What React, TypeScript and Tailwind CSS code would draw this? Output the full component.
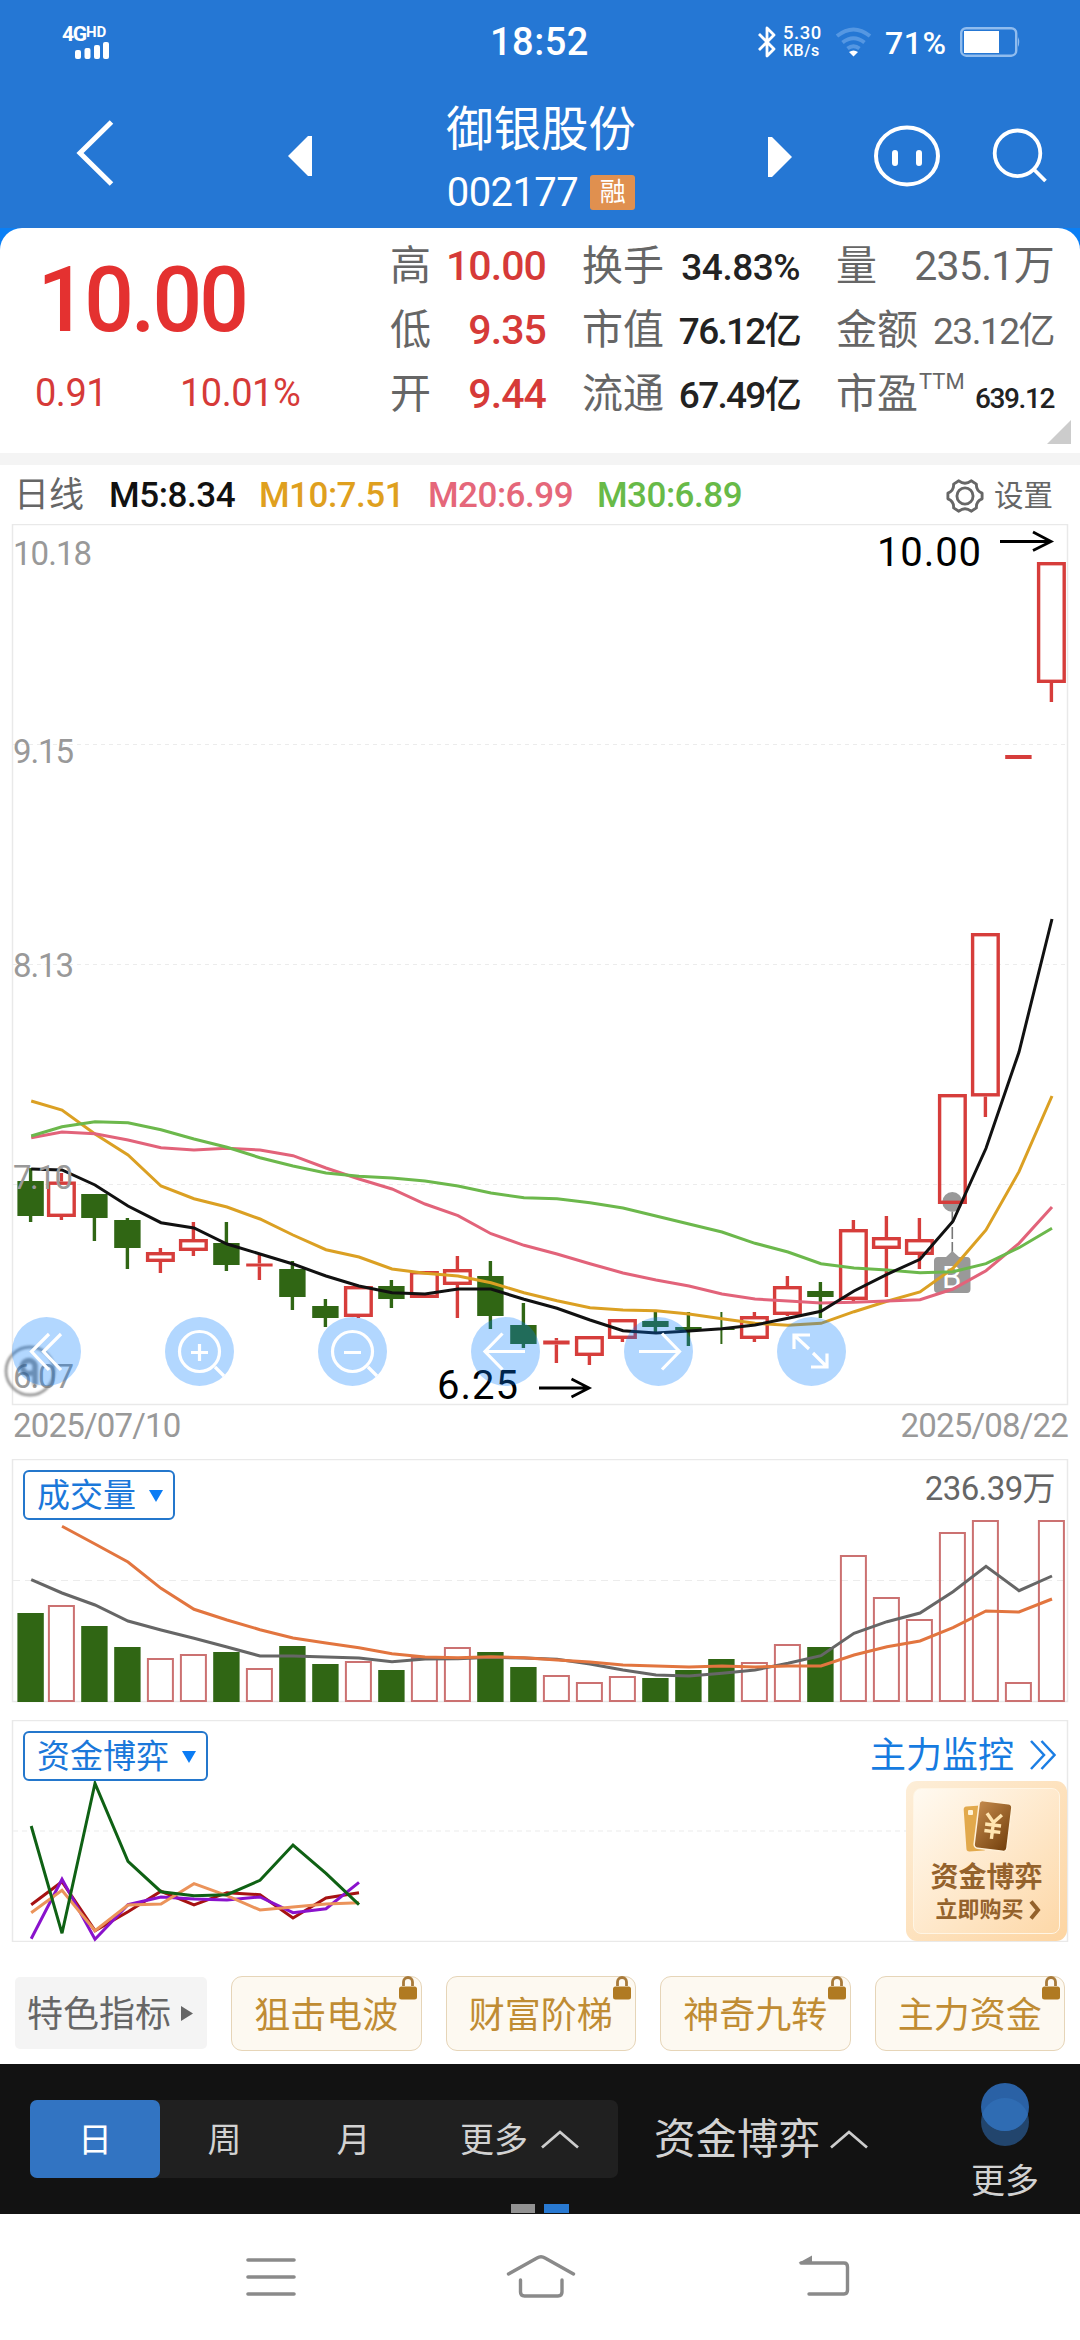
import { type ReactNode } from "react";

type Candle = {
  up: boolean;
  high: number;
  top: number;
  bottom: number;
  low: number;
};

const RED = "#d63d3b";
const GREEN = "#306614";
const STEP = 33;

// [up, high, body top, body bottom, low]
const CANDLES: Candle[] = (
  [
    [0, 1168, 1181, 1216, 1222],
    [1, 1173, 1181.5, 1217, 1220],
    [0, 1194, 1194, 1218, 1241],
    [0, 1218, 1220, 1248, 1269],
    [1, 1248, 1252, 1262, 1273],
    [1, 1222, 1239, 1251, 1256],
    [0, 1222, 1243, 1265, 1271],
    [1, 1255, 1263.5, 1266.5, 1280],
    [0, 1261, 1269, 1297, 1310],
    [0, 1299, 1306, 1318, 1327],
    [1, 1286, 1286, 1317, 1318],
    [0, 1280, 1286, 1299, 1308],
    [1, 1271, 1271, 1298, 1298],
    [1, 1256, 1269, 1285, 1318],
    [0, 1261, 1276, 1316, 1329],
    [0, 1303, 1325, 1344, 1348],
    [1, 1338, 1340.5, 1344.5, 1363],
    [1, 1336, 1336, 1356, 1365],
    [1, 1319, 1319, 1339, 1342],
    [0, 1312, 1321, 1327, 1332],
    [0, 1312, 1327, 1330, 1346],
    [0, 1312, 1329, 1330, 1344],
    [1, 1312, 1316, 1339, 1342],
    [1, 1276, 1286, 1315, 1316],
    [0, 1282, 1291, 1297, 1318],
    [1, 1220, 1229, 1300, 1301],
    [1, 1216, 1237, 1249, 1297],
    [1, 1218, 1239, 1255, 1269],
    [1, 1094, 1094, 1204, 1204],
    [1, 933, 933, 1096.5, 1117],
    [1, 755, 755, 759, 759],
    [1, 562, 562, 683, 702],
  ] as number[][]
).map(([up, high, top, bottom, low]) => ({ up: up === 1, high, top, bottom, low }));

const M5 = [
  1169, 1170, 1185, 1206, 1222.7, 1228, 1244, 1254, 1264, 1276, 1286, 1292.7, 1294, 1289, 1289, 1299.3,
  1308.3, 1320, 1330.7, 1333, 1331, 1328.7, 1325, 1318.3, 1311.3, 1291, 1274.3, 1259.3, 1221.3, 1148.3,
  1052, 919,
];
const M10 = [
  1101, 1110, 1134, 1155, 1186, 1198.7, 1207, 1219, 1235, 1249.7, 1257, 1269, 1273.3, 1276, 1282.7,
  1292.7, 1300.7, 1307.7, 1310, 1310.7, 1314, 1318.7, 1323.3, 1325.3, 1323.3, 1311.7, 1301.3, 1292,
  1268.3, 1230, 1171.7, 1096,
];
const M20 = [
  1137.7, 1132, 1133.7, 1140, 1147.7, 1150, 1148.3, 1150, 1155.7, 1168, 1179, 1189, 1204, 1215.7, 1233.7,
  1245.3, 1254, 1263.7, 1273, 1280, 1286, 1294, 1299, 1301, 1303, 1302.3, 1301, 1299.7, 1289, 1270.7,
  1243.3, 1207,
];
const M30 = [
  1136, 1126.7, 1121.7, 1122.7, 1129.7, 1139, 1147.3, 1157.7, 1166, 1173, 1176.3, 1178, 1181, 1186, 1193,
  1197.7, 1198.7, 1202.7, 1208, 1216, 1224, 1232, 1243.3, 1252, 1263.7, 1268, 1270, 1272.7, 1271.7,
  1263.7, 1247.7, 1228.3,
];

const VOLUMES = [
  1613, 1605, 1626, 1647, 1658, 1654, 1652, 1668, 1646, 1664, 1661, 1670, 1657, 1647, 1652, 1667, 1675,
  1682, 1676, 1678, 1670, 1659, 1662, 1644, 1647, 1555, 1597, 1619, 1532, 1520, 1682, 1520,
];
const VOL5 = [
  1579.7, 1593, 1605, 1621, 1630, 1638.3, 1647, 1656, 1656, 1657, 1658, 1661.7, 1659, 1658.7, 1657.3,
  1658, 1659.3, 1664, 1670, 1675, 1676, 1673.3, 1670, 1663.3, 1655.7, 1633.3, 1621.7, 1613, 1591.7,
  1566.3, 1590.7, 1576,
];
const VOL10 = [
  1526.3, 1544, 1562, 1588.3, 1609.3, 1620, 1629.7, 1638, 1643, 1647.7, 1653.7, 1657, 1657.7, 1656.7,
  1657.7, 1660, 1662, 1665, 1666, 1667, 1666, 1667, 1666, 1666, 1655, 1646.7, 1641, 1627.7, 1611, 1612,
  1599,
];

const FUND_LINES = [
  { color: "#a61212", data: [1904.7, 1881.7, 1930.7, 1911.7, 1891.3, 1905, 1892.7, 1894.7, 1918, 1898, 1892.7] },
  { color: "#8a12cc", data: [1938.7, 1879.3, 1939.3, 1904.7, 1897, 1899, 1900, 1897, 1912.7, 1908.7, 1882.3] },
  { color: "#eb935a", data: [1912.7, 1890.3, 1930.7, 1905, 1904, 1883.7, 1895.7, 1910, 1907, 1904, 1902.7] },
  { color: "#0f6114", data: [1826, 1933.3, 1783.3, 1861.3, 1891.7, 1895.7, 1894.7, 1880.3, 1845, 1873.3, 1904.7] },
];

const TAGS = ["狙击电波", "财富阶梯", "神奇九转", "主力资金"];

function xAt(i: number): number {
  return i === 0 ? 30.6 : 28.4 + i * STEP;
}

function points(data: number[], from = 0): string {
  return data.map((y, i) => `${xAt(i + from) + 0.6},${y}`).join(" ");
}

function Line({ data, color, from = 0 }: { data: number[]; color: string; from?: number }) {
  return <polyline points={points(data, from)} fill="none" stroke={color} strokeWidth="3" />;
}

function StatusBar() {
  return (
    <div className="flex h-[84px] items-center text-white">
      <div className="w-[110px] pl-[62px]">
        <div className="flex h-[16px] items-start leading-none">
          <span className="text-[21px] font-bold leading-[17px] tracking-[-1.200px]">4G</span>
          <span className="text-[15px] font-bold leading-[12px]">HD</span>
        </div>
        <svg width="36" height="17" viewBox="0 0 36 17" className="ml-[12px]" fill="white">
          <rect x="1" y="8" width="6" height="9" rx="2" />
          <rect x="10.5" y="6" width="6" height="11" rx="2" />
          <rect x="20" y="3" width="6" height="14" rx="2" />
          <rect x="29" y="0" width="6" height="17" rx="2" />
        </svg>
      </div>
      <span className="ml-[380px] w-[267px] text-[38px] font-medium tracking-[0.5px]">18:52</span>
      <svg width="20" height="32" viewBox="0 0 20 32" fill="none" stroke="white" strokeWidth="2.8" strokeLinejoin="round">
        <path d="M2 8 L17 23 L10 30 V2 L17 9 L2 24" />
      </svg>
      <div className="ml-[6px] flex w-[40px] flex-col text-[18.500px] font-medium leading-[17px]">
        <span className="tracking-[0.500px]">5.30</span>
        <span className="text-[16px] tracking-[0.500px]">KB/s</span>
      </div>
      <svg width="37" height="30" viewBox="0 0 37 30" className="ml-[12px]" fill="none" stroke="#5597e2" strokeWidth="4">
        <path d="M2 9 Q18.500 -4 35 9" />
        <path d="M7.500 15.500 Q18.500 7 29.500 15.500" />
        <path d="M12.500 21.500 Q18.500 17 24.500 21.500" />
        <path d="M14 25 Q18.500 22 23 25 L18.500 29.500 Z" fill="white" stroke="none" />
      </svg>
      <span className="ml-[13px] w-[75px] pt-[2px] text-[32px] font-medium tracking-[0.500px]">71%</span>
      <svg width="61" height="30" viewBox="0 0 61 30">
        <rect x="1.200" y="1.200" width="55" height="27.500" rx="5" fill="none" stroke="#90bcee" strokeWidth="2.400" />
        <rect x="4" y="4" width="35" height="22" fill="white" />
        <path d="M58 10 Q60.500 15 58 20 Z" fill="#90bcee" />
      </svg>
    </div>
  );
}

function Header() {
  return (
    <div className="flex h-[144px] items-start text-white">
      <svg width="40" height="68" viewBox="0 0 40 68" className="ml-[76px] mt-[35px]" fill="none" stroke="white" strokeWidth="5">
        <path d="M35.500 3 L4 34 L35.500 65" />
      </svg>
      <svg width="24" height="40" viewBox="0 0 24 40" className="ml-[172px] mt-[52px]" fill="white">
        <path d="M24 0 V40 H20 L0 20 L20 0 Z" />
      </svg>
      <div className="ml-[127px] flex w-[204px] flex-col items-center pt-[14px]">
        <span className="h-[64px] text-[47.500px] leading-[64px]">御银股份</span>
        <div className="mt-[11px] flex h-[38px] items-center gap-[12px]">
          <span className="pt-[2px] text-[40px] leading-[38px] tracking-[-0.600px]">002177</span>
          <span className="flex h-[35px] w-[45px] items-center justify-center rounded-[3px] bg-[#e0904f] text-[26px] leading-none">融</span>
        </div>
      </div>
      <svg width="24" height="40" viewBox="0 0 24 40" className="ml-[125px] mt-[53px]" fill="white">
        <path d="M0 0 V40 H4 L24 20 L4 0 Z" />
      </svg>
      <svg width="68" height="62" viewBox="0 0 68 62" className="ml-[81px] mt-[41px]" fill="none" stroke="white" strokeLinecap="round">
        <ellipse cx="34" cy="31" rx="31" ry="28.500" strokeWidth="4" />
        <path d="M22 28 V38 M46 28 V38" strokeWidth="6" />
      </svg>
      <svg width="58" height="58" viewBox="0 0 58 58" className="ml-[50px] mt-[43px]" fill="none" stroke="white" strokeWidth="3.800">
        <circle cx="26.500" cy="26.300" r="22.800" />
        <path d="M42.500 42 L54.500 54" />
      </svg>
    </div>
  );
}

function Row({ label, value, className }: { label: ReactNode; value: string; className: string }) {
  return (
    <div className="flex h-[64px] items-center justify-between whitespace-nowrap">
      <span className="text-[41px] leading-[64px] text-[#666]">{label}</span>
      <span className={"leading-[64px] " + className}>{value}</span>
    </div>
  );
}

function Quote() {
  return (
    <div className="bg-[#0a7ff5]">
      <div className="flex h-[225px] rounded-t-[22px] bg-white">
        <div className="w-[390px] text-[#d63a38]">
          <div className="h-[132px] origin-left scale-x-[0.96] pl-[39px] pt-[26px] text-[91px] font-medium leading-[92px] tracking-[-3px] text-[#e43130]">
            10.00
          </div>
          <div className="flex pl-[35px] pt-[1px] text-[38px] leading-[64px]">
            <span className="w-[145px] tracking-[-0.500px]">0.91</span>
            <span className="tracking-[-0.500px]">10.01%</span>
          </div>
        </div>
        <div className="w-[156px] pt-[6px]">
          <Row label="高" value="10.00" className="text-[41px] font-medium tracking-[-0.900px] text-[#d63a38]" />
          <Row label="低" value="9.35" className="text-[41px] font-medium tracking-[-0.900px] text-[#d63a38]" />
          <Row label="开" value="9.44" className="text-[41px] font-medium tracking-[-0.900px] text-[#d63a38]" />
        </div>
        <div className="ml-[36px] w-[218px] pt-[6px]">
          <Row label="换手" value="34.83%" className="pt-[3px] text-[37px] font-medium tracking-[-0.500px] text-[#222]" />
          <Row label="市值" value="76.12亿" className="pt-[3px] text-[37px] font-medium tracking-[-1.700px] text-[#222]" />
          <Row label="流通" value="67.49亿" className="pt-[3px] text-[37px] font-medium tracking-[-1.700px] text-[#222]" />
        </div>
        <div className="ml-[36px] w-[218px] pt-[6px]">
          <Row label="量" value="235.1万" className="text-[41px] tracking-[-0.700px] text-[#666]" />
          <Row label="金额" value="23.12亿" className="pt-[3px] text-[37px] tracking-[-1.500px] text-[#666]" />
          <Row
            label={
              <span className="flex">
                市盈<span className="ml-[1px] mt-[-12px] text-[22px]">TTM</span>
              </span>
            }
            value="639.12"
            className="pt-[10px] text-[28px] font-medium tracking-[-1.400px] text-[#222]"
          />
        </div>
        <svg width="24" height="24" viewBox="0 0 24 24" className="-ml-[7px] mt-[192px]" fill="#ccc">
          <path d="M24 0 V24 H0 Z" />
        </svg>
      </div>
    </div>
  );
}

function MaBar() {
  return (
    <div className="flex h-[59px] items-center whitespace-nowrap pl-[14px] pt-[3px] text-[35px] font-medium">
      <span className="w-[95px] font-normal text-[#666]">日线</span>
      <span className="w-[150px] tracking-[-0.400px] text-[#111]">M5:8.34</span>
      <span className="w-[169px] tracking-[-0.500px] text-[#dfa01e]">M10:7.51</span>
      <span className="w-[169px] tracking-[-0.500px] text-[#e5677a]">M20:6.99</span>
      <span className="w-[349px] tracking-[-0.500px] text-[#68ba48]">M30:6.89</span>
      <svg width="38" height="36" viewBox="0 0 40 36" fill="none" stroke="#666" strokeWidth="3" strokeLinejoin="round">
        <path d="M13.500 2 Q20 7 26.500 2 L32 5.500 Q31.500 12.500 38 15 V21 Q31.500 23.500 32 30.500 L26.500 34 Q20 29 13.500 34 L8 30.500 Q8.500 23.500 2 21 V15 Q8.500 12.500 8 5.500 Z" />
        <circle cx="20" cy="18" r="8.500" />
      </svg>
      <span className="ml-[10px] text-[29.500px] font-normal text-[#666]">设置</span>
    </div>
  );
}

function CandleMark({ candle, x, thin }: { candle: Candle; x: number; thin: boolean }) {
  const { up, high, top, bottom, low } = candle;
  const color = up ? RED : GREEN;
  const flat = bottom - top < 5;
  return (
    <g stroke={color} strokeWidth={thin ? 2 : 3.4}>
      {high < top && <path d={`M${x} ${high} V${top}`} />}
      {low > bottom && <path d={`M${x} ${bottom} V${low}`} />}
      {up && !flat ? (
        <rect x={x - 12.800} y={top + 1.700} width="25.600" height={bottom - top - 3.400} fill="none" />
      ) : (
        <rect x={x - 13.200} y={top} width="26.400" height={bottom - top} fill={color} stroke="none" />
      )}
    </g>
  );
}

const CONTROLS: ReactNode[] = [
  <path key="first" d="M37 17 L19.500 34.500 L37 53 M49 17 L31.500 34.500 L49 53" />,
  <path key="in" d="M50 50 L59 59 M34.500 27 V44 M26 35.500 H43 M54.500 34.500 A20 20 0 1 1 14.500 34.500 A20 20 0 1 1 54.500 34.500" />,
  <path key="out" d="M50 50 L59 59 M26 35.500 H43 M54.500 34.500 A20 20 0 1 1 14.500 34.500 A20 20 0 1 1 54.500 34.500" />,
  <path key="left" d="M54 34.500 H14 M31.500 16.500 L14 34.500 L31.500 52.500" />,
  <path key="right" d="M15 34.500 H55 M38 16.500 L55.500 34.500 L38 52.500" />,
  <path key="full" d="M17 32 V18 H33 M17 18 L32 32 M36 36 L50 50 M50 36.500 V50 H34" />,
];

function PriceChart() {
  return (
    <div className="relative h-[880px]">
      <svg width="1080" height="882" viewBox="0 524 1080 882" className="block" fontFamily='Roboto, "Noto Sans CJK SC", sans-serif'>
        <rect x="12.500" y="524.500" width="1055" height="880" fill="none" stroke="#e9e9e9" strokeWidth="1.500" />
        <path d="M13 744.500 H1067 M13 964.500 H1067 M13 1184.500 H1067" stroke="#ececec" strokeDasharray="4 4" />
        <circle cx="952.300" cy="1202" r="10" fill="#999" />
        <path d="M952.300 1212 V1252" stroke="#777" strokeWidth="1.600" strokeDasharray="12 3" />
        <path d="M952.300 1251 L959 1257 H967 Q970.500 1257 970.500 1261 V1289 Q970.500 1293 967 1293 H938 Q934 1293 934 1289 V1261 Q934 1257 938 1257 H946 Z" fill="#999" />
        {CANDLES.map((c, i) => (
          <CandleMark key={i} candle={c} x={xAt(i)} thin={i === 21} />
        ))}
        <text x="942" y="1288" fontSize="31" fill="white">B</text>
        <Line data={M10} color="#dba023" />
        <Line data={M20} color="#e2637a" />
        <Line data={M30} color="#6cb84c" />
        <Line data={M5} color="#111" />
        <g fill="#999" fontSize="33">
          <text x="13" y="565" textLength="79">10.18</text>
          <text x="13" y="763" textLength="61">9.15</text>
          <text x="13" y="977" textLength="61">8.13</text>
          <text x="13" y="1189" textLength="60">7.10</text>
          <text x="13" y="1388" textLength="61">6.07</text>
        </g>
        <g fill="#000" fontSize="40">
          <text x="877" y="565.500" textLength="104">10.00</text>
          <text x="437" y="1398.500" textLength="81">6.25</text>
        </g>
        <g fill="none" stroke="#000" strokeWidth="2.800">
          <path d="M1000 541.500 H1051 M1033 532 L1051 541.500 L1033 550.500" />
          <path d="M539 1388 H589 M571.500 1379 L589 1388 L571.500 1397" />
        </g>
      </svg>
      <svg width="60" height="60" viewBox="0 0 60 60" className="absolute left-0 top-[817px] blur-[1px]" fill="none">
        <circle cx="30" cy="30" r="24" stroke="#777" strokeOpacity="0.750" strokeWidth="2.800" />
        <path d="M35 44 V24 A6.500 6.500 0 1 0 33 31" stroke="#444" strokeOpacity="0.550" strokeWidth="5.500" />
      </svg>
      {/* chart controls */}
      <div className="absolute left-[12px] top-[793px] flex gap-[84px]">
        {CONTROLS.map((icon, i) => (
          <svg key={i} width="69" height="69" viewBox="0 0 69 69" fill="none" stroke="white" strokeWidth="3.200">
            <circle cx="34.500" cy="34.500" r="34.500" fill="#007aff" fillOpacity="0.300" stroke="none" />
            {icon}
          </svg>
        ))}
      </div>
    </div>
  );
}

function IndicatorSelect({ label }: { label: string }) {
  return (
    <button className="flex h-[50px] items-center gap-[13px] rounded-[6px] border-2 border-[#2477cc] bg-white pb-0 pl-[12px] pr-[10px] pt-[1px] text-[33px] leading-none text-[#1b78da]">
      {label}
      <svg width="14" height="12" viewBox="0 0 14 12" fill="#0b7cf4">
        <path d="M0 0 H14 L7 12 Z" />
      </svg>
    </button>
  );
}

function VolumeChart() {
  return (
    <div className="relative h-[244px]">
      <svg width="1080" height="244" viewBox="0 1459 1080 244" className="block">
        <rect x="12.500" y="1459.500" width="1055" height="242" fill="none" stroke="#e9e9e9" strokeWidth="1.500" />
        <path d="M13 1580.500 H1067" stroke="#ececec" strokeDasharray="7 5" />
        {VOLUMES.map((y, i) =>
          CANDLES[i].up ? (
            <rect key={i} x={xAt(i) - 12.500} y={y + 1} width="25" height={1700 - y} fill="none" stroke="#cb7171" strokeWidth="2" />
          ) : (
            <rect key={i} x={xAt(i) - 13.200} y={y} width="26.400" height={1702 - y} fill={GREEN} />
          ),
        )}
        <Line data={VOL5} color="#666" />
        <Line data={VOL10} from={1} color="#e2753f" />
      </svg>
      <div className="absolute inset-x-0 top-0 flex items-start justify-between pl-[23px] pr-[25px] pt-[11px]">
        <IndicatorSelect label="成交量" />
        <span className="pt-[2px] text-[33px] leading-[34px] tracking-[-0.600px] text-[#666]">236.39万</span>
      </div>
    </div>
  );
}

function PromoCard() {
  return (
    <div className="absolute right-[13px] top-[61px] h-[160px] w-[161px] rounded-[11px] bg-gradient-to-br from-[#fdeed8] to-[#fdd5a2] p-[7px]">
      <div className="flex h-full flex-col items-center rounded-[8px] border border-[#fff5e4] bg-gradient-to-br from-[#fffaf1] to-[#fdd8a8] pt-[11px] text-[#94622c]">
        <svg width="52" height="54" viewBox="0 0 52 54">
          <defs>
            <linearGradient id="card" x1="0" y1="0" x2="1" y2="1">
              <stop offset="0" stopColor="#c58b4c" />
              <stop offset="1" stopColor="#713e0b" />
            </linearGradient>
          </defs>
          <rect x="4" y="6" width="20" height="45" rx="3" fill="#e2a94c" transform="rotate(-4 14 28)" />
          <rect x="7" y="10" width="5" height="5" rx="1" fill="#fff3d8" />
          <g transform="rotate(7 32 26)">
            <rect x="15.500" y="2" width="33" height="48" rx="4" fill="url(#card)" stroke="#fff0d8" strokeWidth="1.500" />
            <path d="M24.500 14 L32 22.500 L39.500 14 M32 22 V39 M24 25 H40 M24 31.500 H40" fill="none" stroke="#ffe5b0" strokeWidth="3.400" />
          </g>
        </svg>
        <span className="mt-[7px] whitespace-nowrap text-[28px] font-bold leading-[34px]">资金博弈</span>
        <span className="mt-[1px] flex items-center gap-[5px] whitespace-nowrap pl-[3px] text-[22px] font-bold leading-[28px]">
          立即购买
          <svg width="12" height="20" viewBox="0 0 12 20" fill="none" stroke="#94622c" strokeWidth="4">
            <path d="M2 1.500 L9 10 L2 18.500" />
          </svg>
        </span>
      </div>
    </div>
  );
}

function FundChart() {
  return (
    <div className="relative h-[222px]">
      <svg width="1080" height="222" viewBox="0 1720 1080 222" className="block">
        <rect x="12.500" y="1720.500" width="1055" height="221" fill="none" stroke="#e9e9e9" strokeWidth="1.500" />
        <path d="M13 1831 H1067" stroke="#f2f2f2" strokeWidth="1.500" strokeDasharray="5 4" />
        {FUND_LINES.map((l) => (
          <Line key={l.color} data={l.data} color={l.color} />
        ))}
      </svg>
      <div className="absolute inset-x-0 top-0 flex items-start justify-between pl-[23px] pr-[24px] pt-[11px]">
        <IndicatorSelect label="资金博弈" />
        <span className="flex items-center gap-[16px] pt-[7px] text-[36px] leading-[36px] text-[#167be0]">
          主力监控
          <svg width="26" height="30" viewBox="0 0 26 30" className="-mt-[3px]" fill="none" stroke="#1b7ee4" strokeWidth="2.500">
            <path d="M1 1 L14 15 L1 29 M11.500 1 L24.500 15 L11.500 29" />
          </svg>
        </span>
      </div>
      <PromoCard />
    </div>
  );
}

function TagRow() {
  return (
    <div className="flex h-[122px] items-start whitespace-nowrap pl-[15px] pt-[34px] text-[36px]">
      <div className="mt-px flex h-[72px] w-[192px] items-center gap-[10px] rounded-[5px] bg-[#f4f4f4] pl-[12px] text-[#666]">
        <span className="pt-[4px]">特色指标</span>
        <svg width="12" height="15" viewBox="0 0 12 15" fill="#666">
          <path d="M0 0 L12 7.500 L0 15 Z" />
        </svg>
      </div>
      <div className="ml-[24px] flex gap-[24px]">
        {TAGS.map((tag) => (
          <div
            key={tag}
            className="relative flex h-[75px] w-[190.500px] items-center justify-center rounded-[11px] border-[1.500px] border-[#e6d5b8] bg-[#fdf9f1] pt-[4px] text-[#c08c33]"
          >
            {tag}
            <svg width="18" height="24" viewBox="0 0 18 24" className="absolute right-[4px] -top-px">
              <path d="M4.500 10 V6 A4.500 4.500 0 0 1 13.500 6 V10" fill="none" stroke="#a87a3a" strokeWidth="2.800" />
              <rect y="10.500" width="18" height="13" rx="2.500" fill="#b07a22" />
            </svg>
          </div>
        ))}
      </div>
    </div>
  );
}

function Caret() {
  return (
    <svg width="38" height="19" viewBox="0 0 38 19" className="-mt-[3px]" fill="none" stroke="#ccc" strokeWidth="2.800">
      <path d="M1 17.500 L19 2 L37 17.500" />
    </svg>
  );
}

function PeriodBar() {
  return (
    <div className="relative flex h-[150px] bg-[#121212] pl-[30px] text-[34px] text-[#d2d2d2]">
      <div className="mt-[36px] flex h-[78px] w-[588px] items-center rounded-[7px] bg-[#202020]">
        <span className="flex h-full w-[130px] items-center justify-center rounded-[7px] bg-[#3274c2] pt-[3px] text-white">日</span>
        <span className="w-[129px] pt-[3px] text-center">周</span>
        <span className="w-[129px] pt-[3px] text-center">月</span>
        <span className="flex items-center gap-[13px] pl-[42px] pt-[3px]">
          更多
          <Caret />
        </span>
      </div>
      <span className="ml-[36px] mt-[36px] flex h-[78px] w-[260px] items-center gap-[10px] whitespace-nowrap pt-[3px] text-[41.500px]">
        资金博弈
        <Caret />
      </span>
      <div className="ml-[51px] flex w-[80px] flex-col items-center pt-[18px]">
        <svg width="50" height="65" viewBox="0 0 50 65">
          <circle cx="25" cy="40" r="24" fill="#22456d" />
          <circle cx="25" cy="25" r="24" fill="#2a61a5" />
          <path d="M2.200 32.500 A24 24 0 0 1 47.800 32.500 A24 24 0 0 1 2.200 32.500" fill="#2f6cb3" />
        </svg>
        <span className="mt-[9px] leading-[50px]">更多</span>
      </div>
      <div className="absolute bottom-[1px] left-[511px] flex gap-[9px]">
        <i className="h-[9px] w-[24px] bg-[#929292]" />
        <i className="h-[9px] w-[25px] bg-[#2879d2]" />
      </div>
    </div>
  );
}

function NavBar() {
  return (
    <div className="flex h-[126px] items-start bg-white pt-[38px]">
      <svg width="50" height="50" viewBox="0 0 50 50" className="ml-[246px]" stroke="#8a8a8a" strokeWidth="3.600" strokeLinecap="round">
        <path d="M2 8 H48 M2 25 H48 M2 42 H48" />
      </svg>
      <svg width="70" height="50" viewBox="0 0 70 50" className="ml-[210px]" fill="none" stroke="#8a8a8a" strokeWidth="3.400" strokeLinecap="round">
        <path d="M2.500 22 L31 6 Q35 3.500 39 6 L67.500 22" />
        <path d="M14.500 28 V40 Q14.500 44 18.500 44 H52 Q56 44 56 40 V28" />
      </svg>
      <svg width="54" height="50" viewBox="0 0 54 50" className="ml-[221px]" fill="none" stroke="#8a8a8a" strokeWidth="3.400" strokeLinecap="round">
        <path d="M4 11 H47 Q50.500 11 50.500 15 V38 Q50.500 42 47 42 H12" />
        <path d="M1.500 11 L15 3.500 V11 Z" fill="#8a8a8a" stroke="none" />
      </svg>
    </div>
  );
}

export default function App() {
  return (
    <div className='flex h-[2340px] w-[1080px] flex-col overflow-hidden bg-white font-[Roboto,"Noto_Sans_CJK_SC",sans-serif]'>
      <div className="bg-[#2577d4]">
        <StatusBar />
        <Header />
      </div>
      <Quote />
      <div className="h-[12px] bg-[#f4f4f4]" />
      <MaBar />
      <PriceChart />
      <div className="flex h-[55px] justify-between pl-[13px] pr-[12px] pt-[3px] text-[33px] leading-[38px] tracking-[-0.800px] text-[#999]">
        <span>2025/07/10</span>
        <span>2025/08/22</span>
      </div>
      <VolumeChart />
      <div className="h-[17px]" />
      <FundChart />
      <TagRow />
      <PeriodBar />
      <NavBar />
    </div>
  );
}
